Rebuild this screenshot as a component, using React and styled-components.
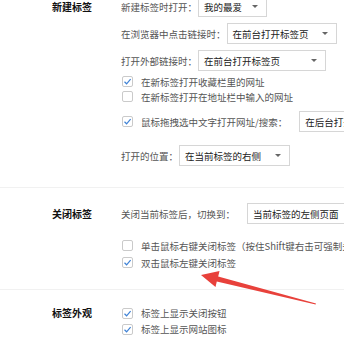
import React from "react";
import styled, { createGlobalStyle } from "styled-components";

const GlobalStyle = createGlobalStyle`
  html, body {
    margin: 0;
    padding: 0;
    background: #fff;
    overflow: hidden;
  }
  body {
    font-family: "Noto Sans CJK SC", "Noto Sans", sans-serif;
  }
`;

const Page = styled.div`
  position: relative;
  width: 344px;
  height: 347px;
  overflow: hidden;
  background: #fff;
`;

const Inner = styled.div`
  margin-top: -7px;
`;

const Section = styled.section`
  display: grid;
  grid-template-columns: 120px 1fr;
  padding: ${(p) => p.$pt}px 0 ${(p) => p.$pb}px;
  border-bottom: ${(p) => (p.$divider ? "1px solid #f1f1f1" : "none")};
`;

const Heading = styled.div`
  padding-left: 52px;
  height: ${(p) => p.$h}px;
  line-height: ${(p) => p.$h}px;
  font-size: 10px;
  font-weight: 700;
  color: #111;
  white-space: nowrap;
`;

const Body = styled.div`
  display: flex;
  flex-direction: column;
  min-width: 0;
`;

const Row = styled.div`
  display: flex;
  align-items: center;
  height: ${(p) => p.$h}px;
  margin-top: ${(p) => p.$mt || 0}px;
  padding-left: 1px;
  white-space: nowrap;
  font-size: 9.5px;
  color: #555;
`;

const Label = styled.span`
  flex-shrink: 0;
  margin-right: ${(p) => p.$gap || 1}px;
`;

const Select = styled.div`
  flex-shrink: 0;
  box-sizing: border-box;
  width: ${(p) => p.$w}px;
  height: 21px;
  border: 1px solid #d6d6d6;
  background: #fff;
  display: flex;
  align-items: center;
  justify-content: space-between;
  padding: 0 8px 0 5px;
  color: #222;
  font-size: 9.5px;
`;

const Caret = styled.span`
  width: 0;
  height: 0;
  border-left: 3px solid transparent;
  border-right: 3px solid transparent;
  border-top: 3px solid #666;
`;

const Box = styled.span`
  flex-shrink: 0;
  box-sizing: border-box;
  width: 11px;
  height: 11px;
  margin-left: 1px;
  margin-right: 8px;
  border: 1px solid #cacaca;
  border-radius: 2px;
  background: #fff;
  display: flex;
  align-items: center;
  justify-content: center;
`;

const Overlay = styled.svg`
  position: absolute;
  left: 0;
  top: 0;
  pointer-events: none;
`;

const Check = ({ checked }) => (
  <Box>
    {checked && (
      <svg width="9" height="9" viewBox="0 0 9 9">
        <path d="M1.5 4.8 L3.6 6.8 L7.6 2.2" fill="none" stroke="#3f82d6" strokeWidth="1.2" />
      </svg>
    )}
  </Box>
);

const Dropdown = ({ w, children, caret = true }) => (
  <Select $w={w}>
    <span>{children}</span>
    {caret && <Caret />}
  </Select>
);

export default function App() {
  return (
    <Page>
      <GlobalStyle />
      <Inner>
        <Section $pt={0} $pb={18} $divider>
          <Heading $h={27}>新建标签</Heading>
          <Body>
            <Row $h={27}>
              <Label>新建标签时打开：</Label>
              <Dropdown w={69}>我的最爱</Dropdown>
            </Row>
            <Row $h={27}>
              <Label>在浏览器中点击链接时：</Label>
              <Dropdown w={110}>在前台打开标签页</Dropdown>
            </Row>
            <Row $h={27}>
              <Label>打开外部链接时：</Label>
              <Dropdown w={128}>在前台打开标签页</Dropdown>
            </Row>
            <Row $h={15}>
              <Check checked />
              <span>在新标签打开收藏栏里的网址</span>
            </Row>
            <Row $h={15}>
              <Check />
              <span>在新标签打开在地址栏中输入的网址</span>
            </Row>
            <Row $h={27} $mt={4}>
              <Check checked />
              <Label $gap={12}>鼠标拖拽选中文字打开网址/搜索：</Label>
              <Dropdown w={110} caret={false}>在后台打开标签页</Dropdown>
            </Row>
            <Row $h={27} $mt={7}>
              <Label>打开的位置：</Label>
              <Dropdown w={111}>在当前标签的右侧</Dropdown>
            </Row>
          </Body>
        </Section>

        <Section $pt={12} $pb={18} $divider>
          <Heading $h={27}>关闭标签</Heading>
          <Body>
            <Row $h={27}>
              <Label $gap={12}>关闭当前标签后，切换到：</Label>
              <Dropdown w={130} caret={false}>当前标签的左侧页面</Dropdown>
            </Row>
            <Row $h={17} $mt={10}>
              <Check />
              <span>单击鼠标右键关闭标签（按住Shift键右击可强制关闭）</span>
            </Row>
            <Row $h={17}>
              <Check checked />
              <span>双击鼠标左键关闭标签</span>
            </Row>
          </Body>
        </Section>

        <Section $pt={15} $pb={0}>
          <Heading $h={16}>标签外观</Heading>
          <Body>
            <Row $h={16}>
              <Check checked />
              <span>标签上显示关闭按钮</span>
            </Row>
            <Row $h={16}>
              <Check checked />
              <span>标签上显示网站图标</span>
            </Row>
          </Body>
        </Section>
      </Inner>

      <Overlay width="344" height="347" viewBox="0 0 344 347">
        <polygon
          points="201,275 219.5,271 218.2,276.6 316,303.4 315.6,304.6 216.8,281.6 215.5,287"
          fill="#e8413b"
        />
      </Overlay>
    </Page>
  );
}
